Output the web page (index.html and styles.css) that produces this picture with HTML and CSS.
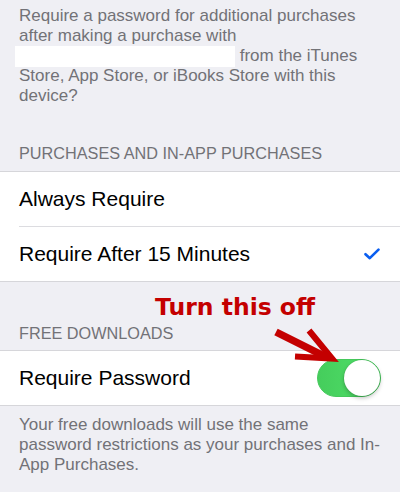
FILE: index.html
```html
<!DOCTYPE html>
<html>
<head>
<meta charset="utf-8">
<link rel="stylesheet" href="styles.css">
</head>
<body>
<div class="screen">
  <p class="note intro">Require a password for additional purchases after making a purchase with <span class="redact"></span> from the iTunes Store, App Store, or iBooks Store with this device?</p>

  <div class="section-header first">Purchases and In-App Purchases</div>
  <div class="group">
    <div class="row"><span class="label">Always Require</span></div>
    <div class="row"><span class="label">Require After 15 Minutes</span>
      <svg class="check" width="16" height="12" viewBox="0 0 16 12"><path d="M1.5 6.2 L5.8 10.2 L14.5 1.6" fill="none" stroke="#0a5ef0" stroke-width="2.6" stroke-linecap="round" stroke-linejoin="round"/></svg>
    </div>
  </div>

  <div class="section-header second">Free Downloads</div>
  <div class="group">
    <div class="row"><span class="label">Require Password</span>
      <div class="switch"><div class="knob"></div></div>
    </div>
  </div>

  <p class="note footer">Your free downloads will use the same password restrictions as your purchases and In-App Purchases.</p>

  <div class="callout">Turn this off</div>
  <svg class="arrow" width="80" height="50" viewBox="0 0 80 50">
    <line x1="8" y1="10" x2="58" y2="35" stroke="#c40000" stroke-width="7.5"/>
    <polyline points="27,34.5 64,36.5 41,8.5" fill="none" stroke="#c40000" stroke-width="6.2" stroke-linejoin="miter" stroke-miterlimit="10"/>
  </svg>
</div>
</body>
</html>
```

FILE: styles.css
```css
html, body {
  margin: 0;
  padding: 0;
}
body {
  background: #efeff4;
  font-family: "Liberation Sans", Arial, sans-serif;
  overflow: hidden;
}
.screen {
  position: relative;
  width: 400px;
  height: 492px;
  overflow: hidden;
}
.note {
  margin: 0;
  font-size: 17px;
  line-height: 20px;
  color: #727277;
}
.intro {
  padding: 6px 19px 0;
}
.redact {
  display: inline-block;
  width: 220px;
  height: 21px;
  background: #ffffff;
  vertical-align: -4px;
  margin-left: -4px;
  margin-bottom: -2px;
}
.section-header {
  padding: 37px 19px 8px;
  font-size: 16.25px;
  line-height: 20px;
  text-transform: uppercase;
  color: #727277;
}
.section-header.second {
  padding-top: 41px;
  padding-bottom: 7px;
}
.group {
  background: #ffffff;
  border-top: 1px solid #d6d6da;
  border-bottom: 1px solid #d6d6da;
}
.row {
  display: flex;
  align-items: center;
  justify-content: space-between;
  height: 54px;
  margin-left: 19px;
  padding-right: 19px;
  font-size: 21px;
  color: #000;
}
.row + .row {
  border-top: 1px solid #dcdce0;
}
.check {
  margin-right: 1px;
  display: block;
}
.switch {
  width: 64px;
  height: 38px;
  box-sizing: border-box;
  border-radius: 19px;
  background: linear-gradient(90deg, #45cd5c, #4cd964 60%);
  border: 1px solid #46c95c;
  display: flex;
  justify-content: flex-end;
  align-items: center;
}
.knob {
  width: 36px;
  height: 36px;
  border-radius: 50%;
  background: #fff;
  box-shadow: 0 2px 4px rgba(0,0,0,0.25), 0 0 0 0.5px rgba(0,0,0,0.1);
}
.footer {
  padding: 9px 19px 0;
}
.callout {
  position: absolute;
  left: 155px;
  top: 295.5px;
  font-family: "DejaVu Sans", Verdana, sans-serif;
  font-weight: bold;
  font-size: 23.5px;
  line-height: 23.5px;
  color: #c40000;
  white-space: nowrap;
}
.arrow {
  position: absolute;
  left: 268px;
  top: 322px;
}
```
